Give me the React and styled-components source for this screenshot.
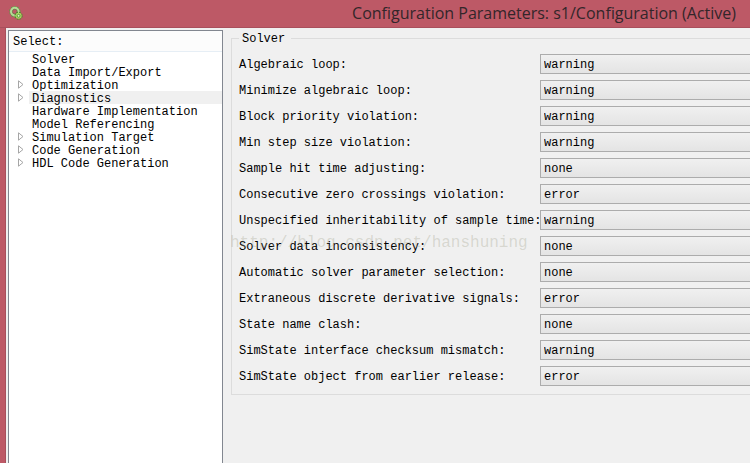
import React, { useState } from "react";
import styled, { createGlobalStyle } from "styled-components";

const pages = [
  { name: "Solver" },
  { name: "Data Import/Export" },
  { name: "Optimization", expandable: true },
  { name: "Diagnostics", expandable: true },
  { name: "Hardware Implementation" },
  { name: "Model Referencing" },
  { name: "Simulation Target", expandable: true },
  { name: "Code Generation", expandable: true },
  { name: "HDL Code Generation", expandable: true },
];

const diagnostics = [
  { id: "algebraicLoop", label: "Algebraic loop:", value: "warning" },
  { id: "minimizeLoop", label: "Minimize algebraic loop:", value: "warning" },
  { id: "blockPriority", label: "Block priority violation:", value: "warning" },
  { id: "minStep", label: "Min step size violation:", value: "warning" },
  { id: "sampleHit", label: "Sample hit time adjusting:", value: "none" },
  { id: "zeroCrossings", label: "Consecutive zero crossings violation:", value: "error" },
  { id: "inheritability", label: "Unspecified inheritability of sample time:", value: "warning" },
  { id: "inconsistency", label: "Solver data inconsistency:", value: "none" },
  { id: "autoSelection", label: "Automatic solver parameter selection:", value: "none" },
  { id: "derivative", label: "Extraneous discrete derivative signals:", value: "error" },
  { id: "nameClash", label: "State name clash:", value: "none" },
  { id: "checksum", label: "SimState interface checksum mismatch:", value: "warning" },
  { id: "earlierRelease", label: "SimState object from earlier release:", value: "error" },
];

function GearsIcon() {
  return (
    <svg width="14" height="14" viewBox="0 0 14 14" aria-hidden="true">
      <circle cx="5.8" cy="5.6" r="5" fill="none" stroke="#5f9a45" strokeWidth="1.3" strokeDasharray="2 1.14" />
      <circle cx="5.8" cy="5.6" r="3.7" fill="none" stroke="#b4dc96" strokeWidth="2.2" />
      <circle cx="5.8" cy="5.6" r="2.4" fill="none" stroke="#4d7c3c" strokeWidth="0.6" />
      <circle cx="9.6" cy="9.8" r="3.5" fill="none" stroke="#4c8a2c" strokeWidth="1.2" strokeDasharray="1.7 1.05" />
      <circle cx="9.6" cy="9.8" r="3" fill="#a5d860" />
      <circle cx="9.6" cy="9.8" r="1.4" fill="#e0f5c0" stroke="#4f8a35" strokeWidth="0.8" />
    </svg>
  );
}

export default function App() {
  const [selected, setSelected] = useState("Diagnostics");
  const [values, setValues] = useState(
    Object.fromEntries(diagnostics.map((item) => [item.id, item.value]))
  );

  return (
    <>
      <GlobalStyle />
      <Window>
        <TitleBar>
          <GearsIcon />
          <Title>Configuration Parameters: s1/Configuration (Active)</Title>
        </TitleBar>
        <Content>
          <TreePanel>
            <TreeHeader>Select:</TreeHeader>
            <Tree>
              {pages.map((page) => (
                <TreeRow key={page.name}>
                  <Expander>
                    {page.expandable && (
                      <svg width="6" height="9" viewBox="0 0 6 9" aria-hidden="true">
                        <path d="M0.5 0.8V8.2L5 4.5Z" fill="#fff" stroke="#a6a6a6" />
                      </svg>
                    )}
                  </Expander>
                  <TreeItem
                    type="button"
                    $selected={page.name === selected}
                    onClick={() => setSelected(page.name)}
                  >
                    {page.name}
                  </TreeItem>
                </TreeRow>
              ))}
            </Tree>
          </TreePanel>
          <Pane>
            <Group>
              <Legend>Solver</Legend>
              {diagnostics.map((item) => (
                <Row key={item.id}>
                  <Label htmlFor={item.id}>{item.label}</Label>
                  <Select
                    id={item.id}
                    value={values[item.id]}
                    onChange={(e) => setValues({ ...values, [item.id]: e.target.value })}
                  >
                    <option>none</option>
                    <option>warning</option>
                    <option>error</option>
                  </Select>
                </Row>
              ))}
            </Group>
            <Watermark>http://blog.csdn.net/hanshuning</Watermark>
          </Pane>
        </Content>
      </Window>
    </>
  );
}

const GlobalStyle = createGlobalStyle`
  * {
    box-sizing: border-box;
  }
  body {
    margin: 0;
    overflow: hidden;
    color: #000;
    font-family: "Liberation Mono", monospace;
    font-size: 12px;
  }
`;
const Window = styled.div`
  display: flex;
  flex-direction: column;
  min-height: 100vh;
  background-color: #bd5966;
`;
const TitleBar = styled.header`
  display: flex;
  align-items: center;
  height: 28px;
  padding: 0 14px 2px 9px;
  border-bottom: 1px solid #a94f5c;
`;
const Title = styled.h1`
  flex: 1;
  margin: 0;
  text-align: right;
  white-space: nowrap;
  font-family: "Open Sans", sans-serif;
  font-size: 16px;
  font-weight: 400;
  line-height: 24px;
  color: #33262a;
`;
const Content = styled.main`
  display: flex;
  flex: 1;
  margin-left: 5px;
  border-left: 1px solid #a94f5c;
  background-color: #f0f0f0;
`;
const TreePanel = styled.nav`
  width: 215px;
  flex-shrink: 0;
  margin: 2px 0 0 2px;
  border: 1px solid #828790;
  border-bottom: none;
  background-color: #fff;
`;
const TreeHeader = styled.div`
  height: 21px;
  padding-left: 4px;
  border-bottom: 1px solid #e6eef5;
  background-color: #fcfcfc;
  line-height: 22px;
`;
const Tree = styled.ul`
  margin: 0;
  padding: 0;
  list-style: none;
`;
const TreeRow = styled.li`
  display: flex;
  height: 13px;
`;
const Expander = styled.span`
  display: flex;
  align-items: center;
  width: 20px;
  padding-left: 9px;
`;
const TreeItem = styled.button`
  flex: 1;
  padding: 2px 0 0 3px;
  border: none;
  background-color: ${(props) => (props.$selected ? "#f0f0f0" : "transparent")};
  color: inherit;
  font: inherit;
  line-height: 13px;
  text-align: left;
  white-space: nowrap;
`;
const Pane = styled.section`
  position: relative;
  flex: 1;
  min-width: 0;
  padding: 3px 0 0 8px;
`;
const Group = styled.fieldset`
  min-width: 0;
  margin: 0;
  padding: 5px 0 5px 7px;
  border: 1px solid #dcdcdc;
  border-right: none;
`;
const Legend = styled.legend`
  padding: 1px 6px 0 3px;
  line-height: 14px;
`;
const Row = styled.div`
  display: flex;
  align-items: center;
  height: 26px;
`;
const Label = styled.label`
  width: 301px;
  flex-shrink: 0;
  padding-top: 3px;
  line-height: 15px;
  white-space: nowrap;
`;
const Select = styled.select`
  appearance: none;
  flex: 1;
  min-width: 0;
  height: 20px;
  padding: 1px 3px 0;
  border: 1px solid #acacac;
  border-right: none;
  border-radius: 0;
  background: linear-gradient(#f0f0f0, #e4e4e4);
  color: inherit;
  font: inherit;
`;
const Watermark = styled.span`
  position: absolute;
  top: 205px;
  left: 7px;
  color: rgba(160, 160, 140, 0.32);
  font-size: 16px;
  line-height: 20px;
  pointer-events: none;
`;
